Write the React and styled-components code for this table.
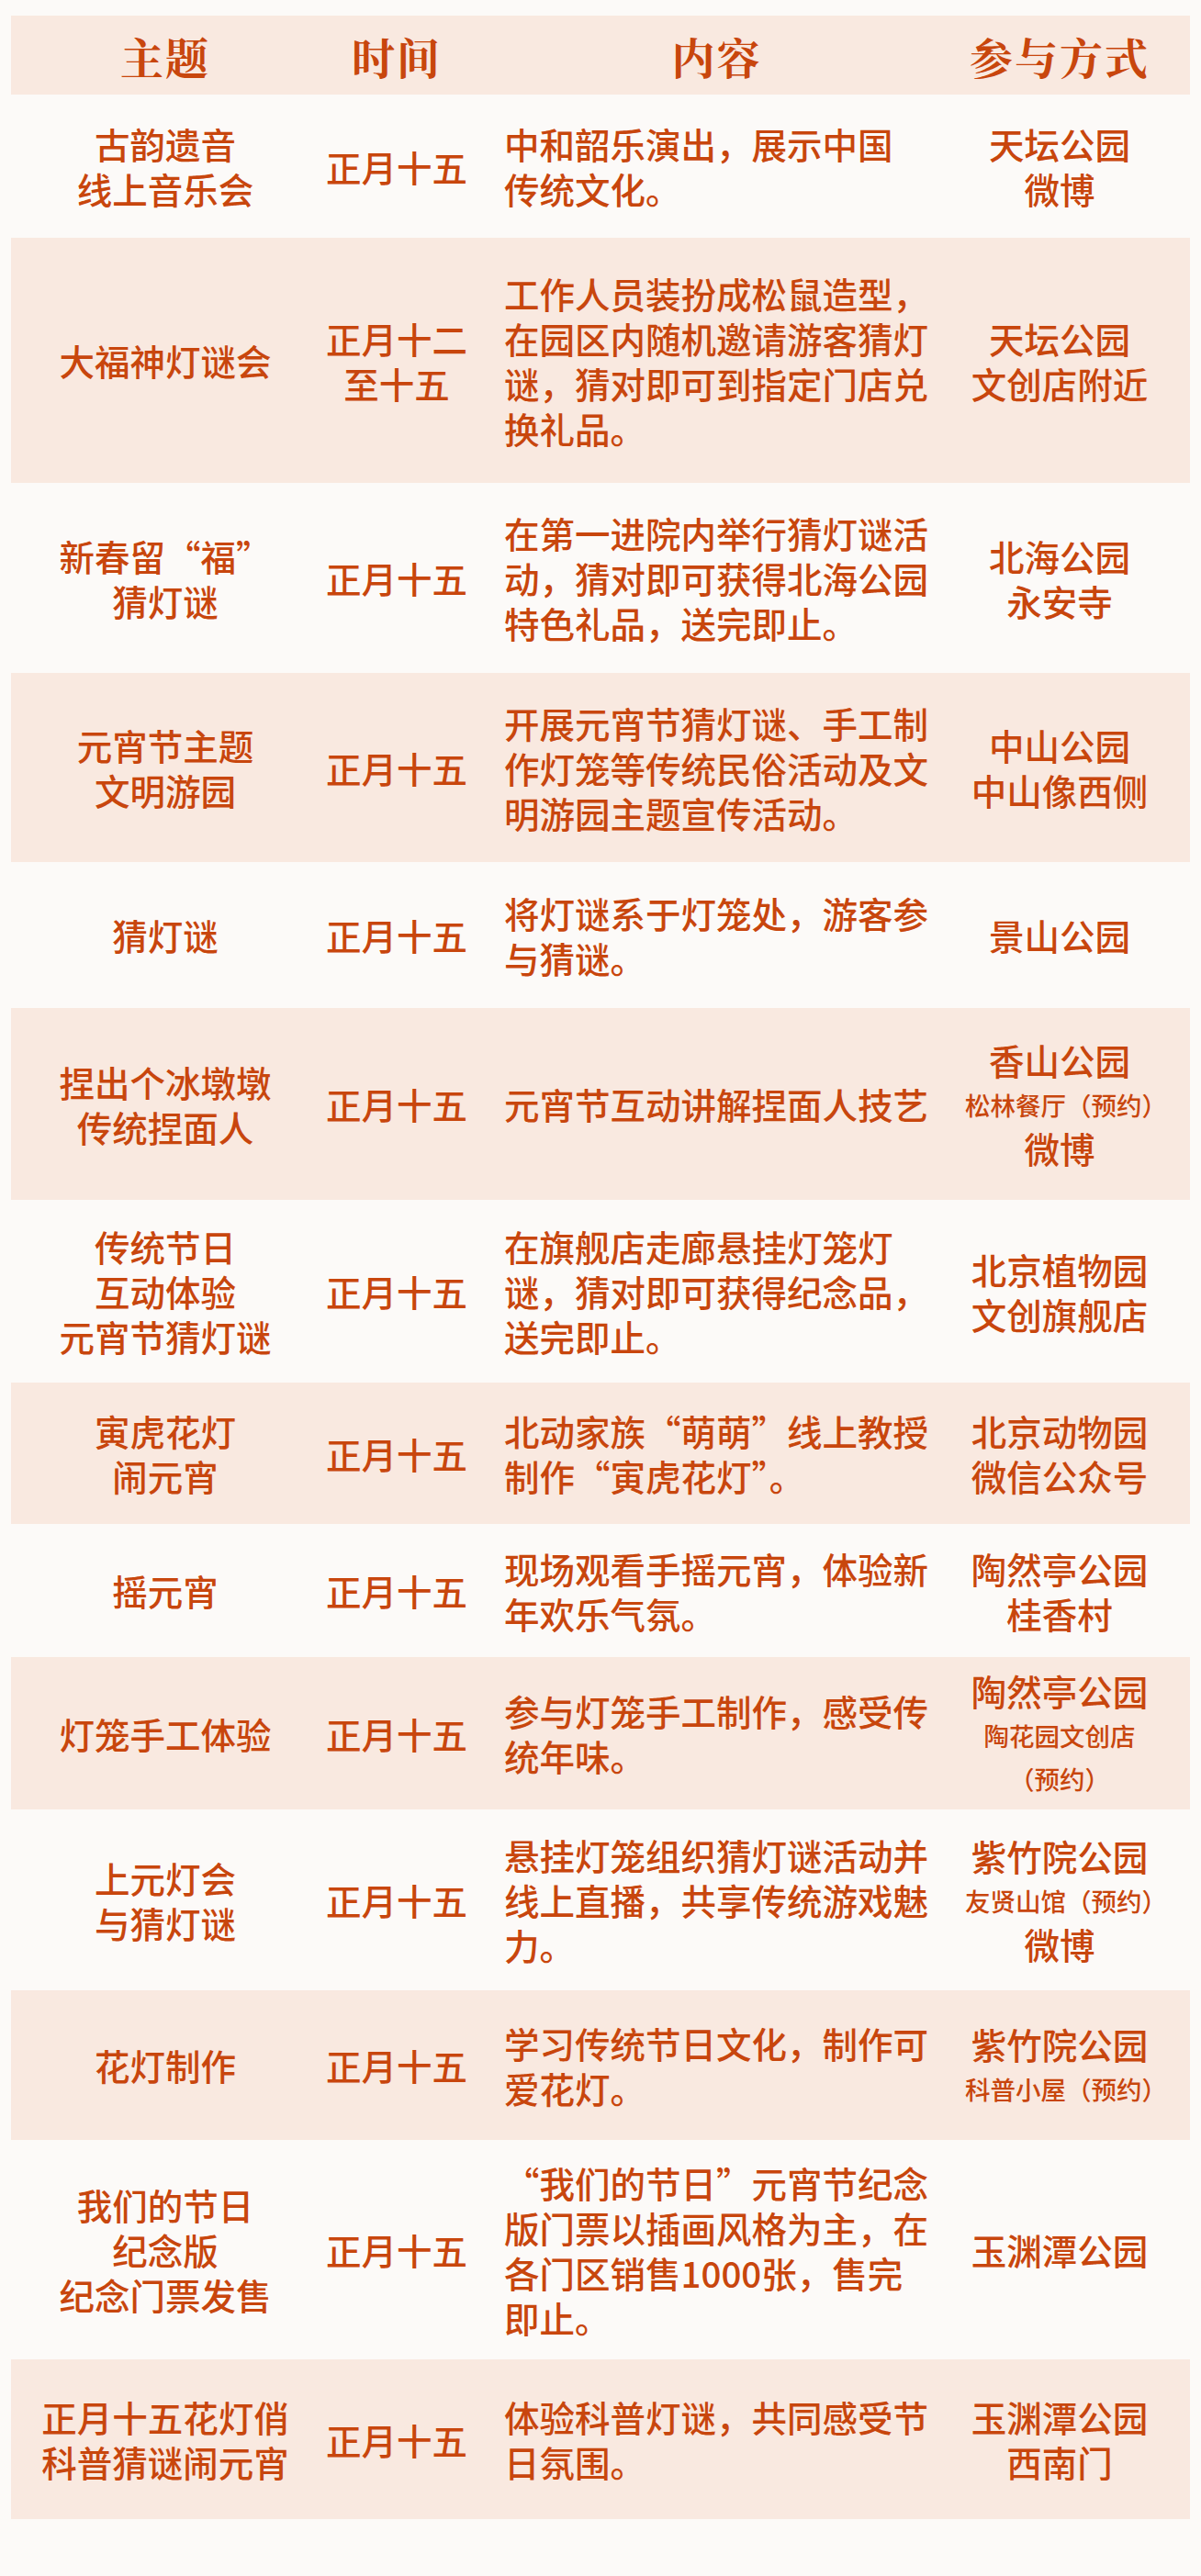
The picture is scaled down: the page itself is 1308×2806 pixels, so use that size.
import React from 'react'
import styled, { createGlobalStyle } from 'styled-components'

const GlobalStyle = createGlobalStyle`
  html, body {
    margin: 0;
    padding: 0;
    background: #fcfaf8;
  }
  body {
    font-family: "Noto Sans CJK SC", "Noto Sans", sans-serif;
  }
`

const COLS = '336px 168px 496px 284px'

const Page = styled.div`
  min-height: 2806px;
  box-sizing: border-box;
  padding: 17px 12px 62px;
  background: #fcfaf8;
  color: #c8460d;
`

const Table = styled.div`
  display: flex;
  flex-direction: column;
  width: 1284px;
`

const HeadRow = styled.div`
  display: grid;
  grid-template-columns: ${COLS};
  align-items: center;
  height: 86px;
  background: #f9e9e0;
`

const HeadCell = styled.div`
  text-align: center;
  font-family: "Noto Serif CJK SC", "Noto Sans CJK SC", serif;
  font-weight: 700;
  font-size: 47px;
  letter-spacing: 2px;
  line-height: 1;
  padding-left: ${p => p.$pad || 0}px;
`

const Row = styled.div`
  display: grid;
  grid-template-columns: ${COLS};
  align-items: center;
  height: ${p => p.$h}px;
  background: ${p => (p.$shade ? '#f9e9e0' : 'transparent')};
`

const Cell = styled.div`
  display: flex;
  flex-direction: column;
  align-items: ${p => (p.$left ? 'flex-start' : 'center')};
  text-align: ${p => (p.$left ? 'left' : 'center')};
  padding-left: ${p => (p.$left ? 33 : 0)}px;
  font-size: 38.5px;
  font-weight: 500;
  line-height: 49px;
  white-space: nowrap;
`

const Text = styled.p`
  margin: 0;
`

const Small = styled.p`
  margin: 5px 0 4px;
  padding-left: ${p => (p.$paren ? 14 : 0)}px;
  font-size: 27.5px;
  line-height: 38px;
`

const S = t => ({ t, small: true })

const rows = [
  { h: 156, topic: ['古韵遗音', '线上音乐会'], time: ['正月十五'], content: ['中和韶乐演出，展示中国', '传统文化。'], place: ['天坛公园', '微博'] },
  { h: 267, topic: ['大福神灯谜会'], time: ['正月十二', '至十五'], content: ['工作人员装扮成松鼠造型，', '在园区内随机邀请游客猜灯', '谜，猜对即可到指定门店兑', '换礼品。'], place: ['天坛公园', '文创店附近'] },
  { h: 207, topic: ['新春留“福”', '猜灯谜'], time: ['正月十五'], content: ['在第一进院内举行猜灯谜活', '动，猜对即可获得北海公园', '特色礼品，送完即止。'], place: ['北海公园', '永安寺'] },
  { h: 206, topic: ['元宵节主题', '文明游园'], time: ['正月十五'], content: ['开展元宵节猜灯谜、手工制', '作灯笼等传统民俗活动及文', '明游园主题宣传活动。'], place: ['中山公园', '中山像西侧'] },
  { h: 159, topic: ['猜灯谜'], time: ['正月十五'], content: ['将灯谜系于灯笼处，游客参', '与猜谜。'], place: ['景山公园'] },
  { h: 209, topic: ['捏出个冰墩墩', '传统捏面人'], time: ['正月十五'], content: ['元宵节互动讲解捏面人技艺'], place: ['香山公园', S('松林餐厅（预约）'), '微博'] },
  { h: 199, topic: ['传统节日', '互动体验', '元宵节猜灯谜'], time: ['正月十五'], content: ['在旗舰店走廊悬挂灯笼灯', '谜，猜对即可获得纪念品，', '送完即止。'], place: ['北京植物园', '文创旗舰店'] },
  { h: 154, topic: ['寅虎花灯', '闹元宵'], time: ['正月十五'], content: ['北动家族“萌萌”线上教授', '制作“寅虎花灯”。'], place: ['北京动物园', '微信公众号'] },
  { h: 145, topic: ['摇元宵'], time: ['正月十五'], content: ['现场观看手摇元宵，体验新', '年欢乐气氛。'], place: ['陶然亭公园', '桂香村'] },
  { h: 166, topic: ['灯笼手工体验'], time: ['正月十五'], content: ['参与灯笼手工制作，感受传', '统年味。'], place: ['陶然亭公园', S('陶花园文创店'), S('（预约）')] },
  { h: 197, topic: ['上元灯会', '与猜灯谜'], time: ['正月十五'], content: ['悬挂灯笼组织猜灯谜活动并', '线上直播，共享传统游戏魅', '力。'], place: ['紫竹院公园', S('友贤山馆（预约）'), '微博'] },
  { h: 163, topic: ['花灯制作'], time: ['正月十五'], content: ['学习传统节日文化，制作可', '爱花灯。'], place: ['紫竹院公园', S('科普小屋（预约）')] },
  { h: 239, topic: ['我们的节日', '纪念版', '纪念门票发售'], time: ['正月十五'], content: ['“我们的节日”元宵节纪念', '版门票以插画风格为主，在', '各门区销售1000张，售完', '即止。'], place: ['玉渊潭公园'] },
  { h: 174, topic: ['正月十五花灯俏', '科普猜谜闹元宵'], time: ['正月十五'], content: ['体验科普灯谜，共同感受节', '日氛围。'], place: ['玉渊潭公园', '西南门'] },
]

// consecutive normal lines go into one paragraph, small notes stand alone
const group = items => {
  const out = []
  items.forEach(it => {
    if (typeof it === 'string') {
      const last = out[out.length - 1]
      if (last && !last.small) last.lines.push(it)
      else out.push({ lines: [it] })
    } else {
      out.push(it)
    }
  })
  return out
}

const Lines = ({ items }) =>
  group(items).map((g, i) =>
    g.small ? (
      <Small key={i} $paren={g.t.length > 5 && g.t.endsWith('）')}>{g.t}</Small>
    ) : (
      <Text key={i}>
        {g.lines.map((l, j) => (
          <React.Fragment key={j}>
            {j > 0 && <br />}
            {l}
          </React.Fragment>
        ))}
      </Text>
    )
  )

const App = () => {
  return (
    <Page>
      <GlobalStyle />
      <Table>
        <HeadRow>
          <HeadCell>主题</HeadCell>
          <HeadCell>时间</HeadCell>
          <HeadCell $pad={33}>内容</HeadCell>
          <HeadCell>参与方式</HeadCell>
        </HeadRow>
        {rows.map((r, i) => (
          <Row key={i} $h={r.h} $shade={i % 2 === 1}>
            <Cell><Lines items={r.topic} /></Cell>
            <Cell><Lines items={r.time} /></Cell>
            <Cell $left><Lines items={r.content} /></Cell>
            <Cell><Lines items={r.place} /></Cell>
          </Row>
        ))}
      </Table>
    </Page>
  )
}

export default App
